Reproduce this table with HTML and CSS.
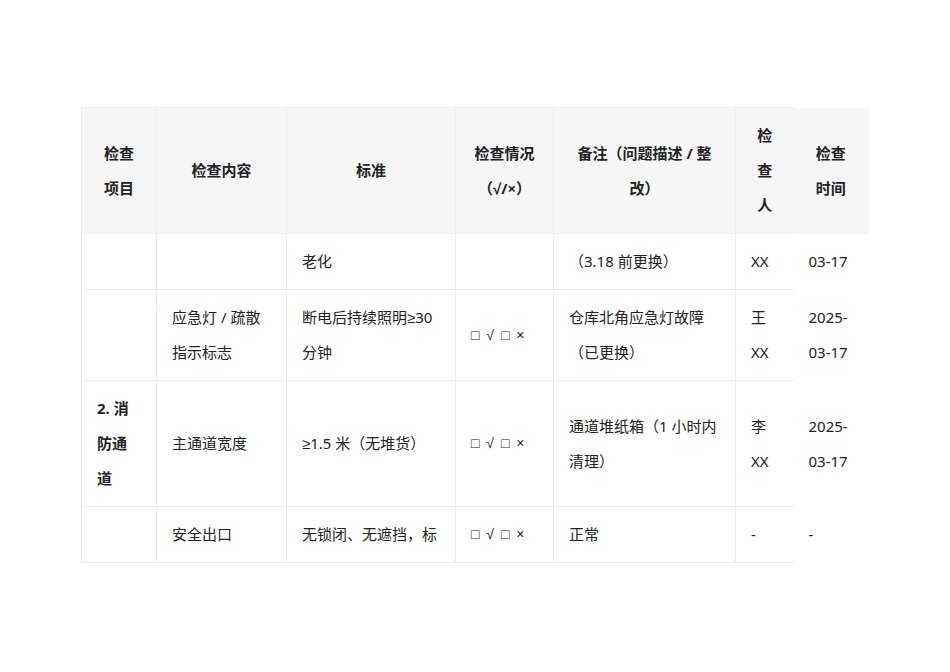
FILE: index.html
```html
<!DOCTYPE html>
<html lang="zh">
<head>
<meta charset="utf-8">
<title>检查表</title>
<link rel="stylesheet" href="styles.css">
</head>
<body>
<div class="page">
<table class="sheet">
<colgroup>
<col class="c1"><col class="c2"><col class="c3"><col class="c4"><col class="c5"><col class="c6"><col class="c7">
</colgroup>
<thead>
<tr>
<th>检查项目</th>
<th>检查内容</th>
<th>标准</th>
<th>检查情况（√/×）</th>
<th>备注（问题描述 / 整改）</th>
<th class="who">检查人</th>
<th class="last">检查时间</th>
</tr>
</thead>
<tbody>
<tr>
<td></td>
<td></td>
<td>老化</td>
<td></td>
<td>（3.18 前更换）</td>
<td class="who">XX</td>
<td class="last">03-17</td>
</tr>
<tr>
<td></td>
<td>应急灯 / 疏散指示标志</td>
<td>断电后持续照明≥30 分钟</td>
<td class="check">□ √ □ ×</td>
<td>仓库北角应急灯故障（已更换）</td>
<td class="who">王 XX</td>
<td class="last">2025-03-17</td>
</tr>
<tr>
<td class="item">2. 消防通道</td>
<td>主通道宽度</td>
<td>≥1.5 米（无堆货）</td>
<td class="check">□ √ □ ×</td>
<td>通道堆纸箱（1 小时内清理）</td>
<td class="who">李 XX</td>
<td class="last">2025-03-17</td>
</tr>
<tr>
<td></td>
<td>安全出口</td>
<td>无锁闭、无遮挡，标</td>
<td class="check">□ √ □ ×</td>
<td>正常</td>
<td class="who">-</td>
<td class="last">-</td>
</tr>
</tbody>
</table>
</div>
</body>
</html>
```
FILE: styles.css
```css
html, body {
  margin: 0;
  padding: 0;
  background: #ffffff;
}
.page {
  padding: 107px 0 0 81px;
}
.sheet {
  border-collapse: collapse;
  table-layout: fixed;
  width: 787px;
  font-family: "Noto Sans", "Liberation Sans", "Noto Sans CJK SC", sans-serif;
  font-size: 15px;
  line-height: 35px;
  color: #222222;
}
.c1 { width: 75px; }
.c2 { width: 130px; }
.c3 { width: 169px; }
.c4 { width: 98px; }
.c5 { width: 182px; }
.c6 { width: 58px; }
.c7 { width: 75px; }
.sheet th,
.sheet td {
  border: 1px solid #ececec;
  padding: 10px 15px;
  vertical-align: middle;
}
.sheet th {
  background: #f6f6f6;
  font-weight: 700;
  text-align: center;
}
.sheet td {
  text-align: left;
}
.sheet .who {
  border-right: none;
}
.sheet .last {
  border: none;
}
.item {
  font-weight: 700;
}
.check {
  font-family: "Liberation Sans", "DejaVu Sans", sans-serif;
  font-size: 14px;
  word-spacing: 3px;
  white-space: nowrap;
}
```
